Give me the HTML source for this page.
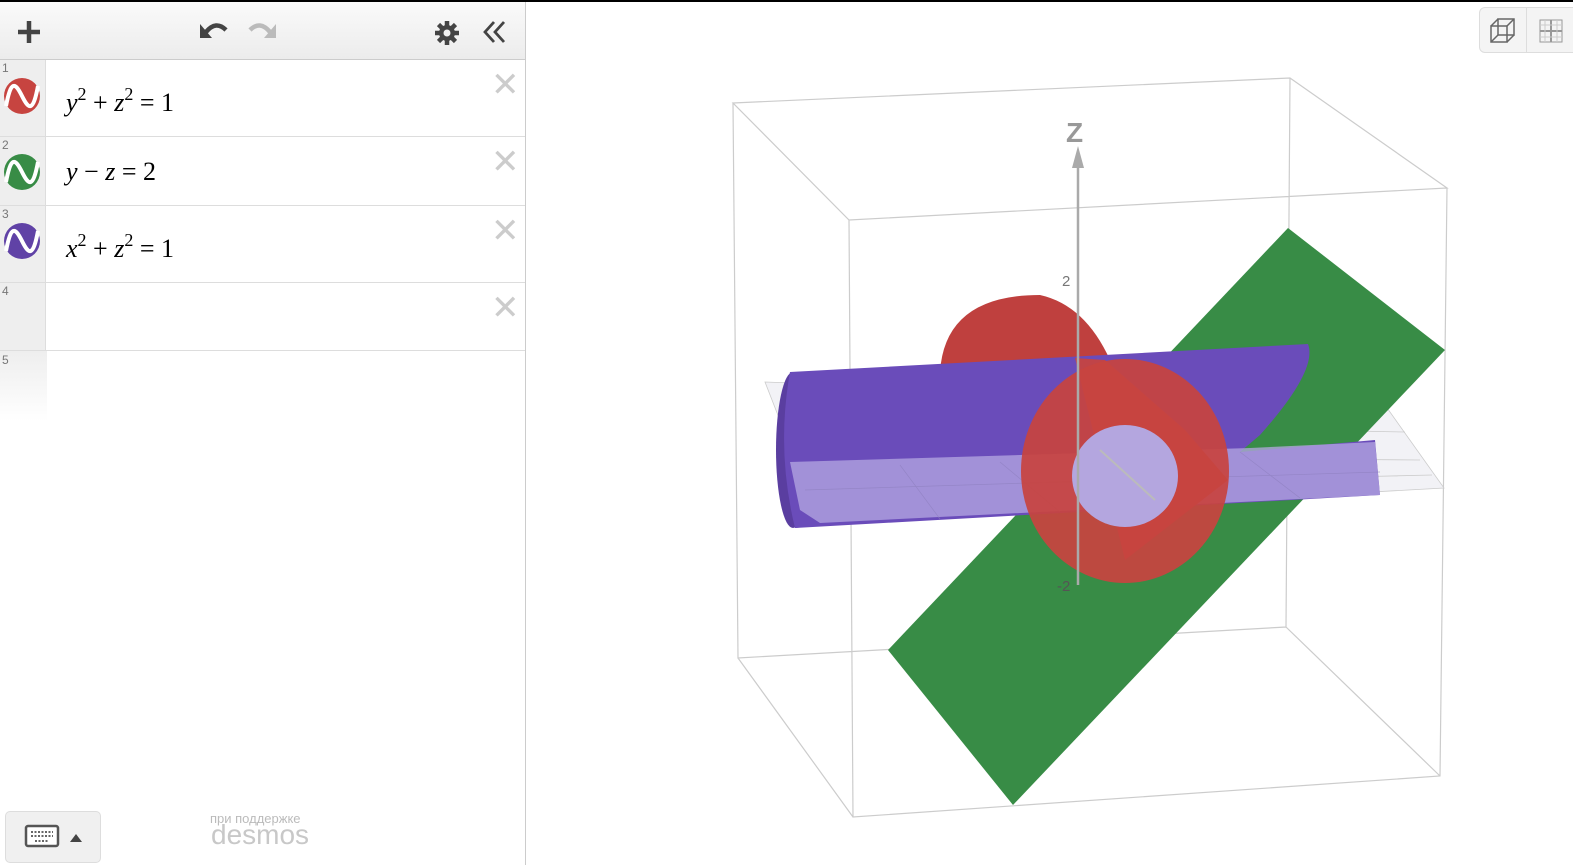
<!DOCTYPE html>
<html><head><meta charset="utf-8"><style>
*{margin:0;padding:0;box-sizing:border-box}
body{width:1573px;height:865px;overflow:hidden;background:#fff;font-family:"Liberation Sans",sans-serif;position:relative}
#top{position:absolute;left:0;top:0;width:1573px;height:2px;background:#000}
#panel{position:absolute;left:0;top:2px;width:526px;height:863px;border-right:1px solid #ccc;background:#fff}
#hdr{position:absolute;left:0;top:0;width:525px;height:58px;background:linear-gradient(#fafafa,#ececec);border-bottom:1px solid #ccc}
.row{position:absolute;left:0;width:525px;border-bottom:1px solid #ddd}
.gut{position:absolute;left:0;top:0;width:46px;height:100%;background:#eee;border-right:1px solid #ddd}
.num{position:absolute;left:2px;top:1px;font-size:12px;color:#777}
.ic{position:absolute;left:4px;width:36px;height:36px}
.math{position:absolute;left:66px;font-family:"Liberation Serif",serif;font-size:26px;color:#000;white-space:nowrap}
.math i{font-style:italic}
.math sup{font-size:18px;vertical-align:11px}
.x{position:absolute;left:491px;font-size:34px;color:#ccc;line-height:1}
</style></head><body>
<div id="top"></div>
<div id="panel">
 <div id="hdr">
  <svg style="position:absolute;left:17px;top:18px" width="24" height="24"><path d="M12 1v22M1 12h22" stroke="#444" stroke-width="4.5"/></svg>
  <svg style="position:absolute;left:198px;top:18px" width="32" height="20"><path d="M8 12 Q18 0 28 10" fill="none" stroke="#444" stroke-width="4.5"/><path d="M2 4v14h12z" fill="#444"/></svg>
  <svg style="position:absolute;left:246px;top:18px" width="32" height="20"><path d="M4 10 Q14 0 24 12" fill="none" stroke="#bbb" stroke-width="4.5"/><path d="M30 4v14h-12z" fill="#bbb"/></svg>
  <svg style="position:absolute;left:434px;top:18px" width="26" height="26" viewBox="0 0 26 26"><g fill="#444"><circle cx="13" cy="13" r="8"/><g stroke="#444" stroke-width="4.5"><path d="M13 1v24M1 13h24M4.5 4.5l17 17M21.5 4.5l-17 17"/></g></g><circle cx="13" cy="13" r="3.5" fill="#f0f0f0"/></svg>
  <svg style="position:absolute;left:482px;top:18px" width="26" height="24"><path d="M12 2L3 12l9 10M22 2l-9 10 9 10" fill="none" stroke="#444" stroke-width="2.8"/></svg>
 </div>
 <div class="row" style="top:58px;height:77px"><div class="gut"></div><span class="num">1</span>
  <svg class="ic" style="top:18px" viewBox="0 0 36 36"><circle cx="18" cy="18" r="18" fill="#c74440"/><path d="M2 28 C7 2 11 4 18 18 S29 34 34 8" fill="none" stroke="#fff" stroke-width="4"/></svg>
  <div class="math" style="top:24px"><i>y</i><sup>2</sup> + <i>z</i><sup>2</sup> = 1</div><span class="x" style="top:8px">✕</span></div>
 <div class="row" style="top:135px;height:69px"><div class="gut"></div><span class="num">2</span>
  <svg class="ic" style="top:17px" viewBox="0 0 36 36"><circle cx="18" cy="18" r="18" fill="#388c46"/><path d="M2 28 C7 2 11 4 18 18 S29 34 34 8" fill="none" stroke="#fff" stroke-width="4"/></svg>
  <div class="math" style="top:20px"><i>y</i> − <i>z</i> = 2</div><span class="x" style="top:8px">✕</span></div>
 <div class="row" style="top:204px;height:77px"><div class="gut"></div><span class="num">3</span>
  <svg class="ic" style="top:17px" viewBox="0 0 36 36"><circle cx="18" cy="18" r="18" fill="#6042a6"/><path d="M2 28 C7 2 11 4 18 18 S29 34 34 8" fill="none" stroke="#fff" stroke-width="4"/></svg>
  <div class="math" style="top:24px"><i>x</i><sup>2</sup> + <i>z</i><sup>2</sup> = 1</div><span class="x" style="top:8px">✕</span></div>
 <div class="row" style="top:281px;height:68px"><div class="gut"></div><span class="num">4</span><span class="x" style="top:8px">✕</span></div>
 <div style="position:absolute;left:0;top:349px;width:47px;height:70px;background:linear-gradient(#eee,#fff)"></div>
 <span class="num" style="top:351px">5</span>
 <div style="position:absolute;left:5px;top:809px;width:96px;height:52px;border:1px solid #ddd;border-radius:5px;background:#f0f0f0">
  <svg style="position:absolute;left:18px;top:12px" width="60" height="24"><rect x="2" y="2" width="32" height="20" rx="2" fill="#fff" stroke="#555" stroke-width="2.5"/><path d="M7 8h22M7 12h22M11 17h14" stroke="#666" stroke-width="2" stroke-dasharray="2 1.5"/><path d="M46 18l6-8 6 8z" fill="#444"/></svg>
 </div>
 <div style="position:absolute;left:210px;top:809px;font-size:13px;color:#bbb">при поддержке</div>
 <div style="position:absolute;left:211px;top:817px;font-size:28px;color:#c8c8c8">desmos</div>
</div>
<svg style="position:absolute;left:0;top:0" width="1573" height="865">
 <g stroke="#ccc" stroke-width="1.2" fill="none">
  <path d="M733 103L1290 78L1447 188L849 220Z M733 103L738 658L1286 627L1290 78 M1447 188L1440 776L853 817L849 220 M738 658L853 817 M1286 627L1440 776"/>
 </g>
 <polygon points="765,382 1385,405 1444,488 820,523" fill="#f2f2f6"/>
 <g stroke="#ccc" stroke-width="0.8" fill="none"><path d="M765 382L1385 405L1444 488L820 523Z M778 420L1405 432M790 455L1420 460M805 490L1432 475"/></g>
 <polygon points="1288,228 1445,350 1013,805 888,650" fill="#388c46"/>
 <path d="M940 372 Q945 295 1040 295 Q1085 305 1110 360 Z" fill="#bf403e"/>
 <path d="M790 372L1308 344 Q1318 370 1260 435 L1240 452 L1375 440 L1380 495 L795 528 Z" fill="#6a4cba"/>
 <ellipse cx="793" cy="450" rx="17" ry="78" fill="#5a3ea0"/>
 <path d="M810 372 Q826 450 812 526 L795 528 Q776 450 790 372Z" fill="#6a4cba"/>
 <polygon points="790,462 1250,448 1375,442 1380,495 820,523 800,510" fill="#b5a8e2" opacity="0.75"/>
 <g stroke="#8f80c0" stroke-width="0.7" opacity="0.7"><path d="M805 490L1380 472M900 465L940 519M1000 462L1060 512M1240 452L1300 498"/></g>
 <path d="M1075 358 L1105 360 L1185 430 L1228 480 L1125 560 Z" fill="#c74440" opacity="0.93"/>
 <ellipse cx="1125" cy="471" rx="104" ry="112" fill="#c74440" opacity="0.93"/>
 <ellipse cx="1125" cy="476" rx="53" ry="51" fill="#b4a6df"/>
 <path d="M1078 585V160" stroke="#aaa" stroke-width="2.5"/><path d="M1072 168l6-22 6 22z" fill="#aaa"/>
 <text x="1066" y="142" font-size="28" font-weight="bold" fill="#999" font-family="Liberation Sans">Z</text>
 <text x="1062" y="286" font-size="15" fill="#777" font-family="Liberation Sans">2</text>
 <text x="1057" y="591" font-size="15" fill="#555" font-family="Liberation Sans">-2</text>
 <path d="M1100 450L1155 500" stroke="#bbb" stroke-width="2"/>
</svg>
<div style="position:absolute;left:1479px;top:7px;width:100px;height:46px;border:1px solid #ddd;border-radius:6px;background:#f4f4f4">
 <div style="position:absolute;left:46px;top:0;width:1px;height:44px;background:#ddd"></div>
 <svg style="position:absolute;left:8px;top:8px" width="30" height="30"><g fill="none" stroke="#666" stroke-width="1.5"><rect x="3" y="10" width="16" height="16"/><rect x="10" y="3" width="16" height="16"/><path d="M3 10l7-7M19 10l7-7M3 26l7-7M19 26l7-7"/></g></svg>
 <svg style="position:absolute;left:58px;top:10px" width="26" height="26"><g stroke="#999" fill="none"><rect x="2" y="2" width="22" height="22"/><path d="M13 2v22M2 13h22" stroke-width="2"/><path d="M7 2v22M19 2v22M2 7h22M2 19h22" stroke="#ccc"/></g></svg>
</div>
</body></html>
